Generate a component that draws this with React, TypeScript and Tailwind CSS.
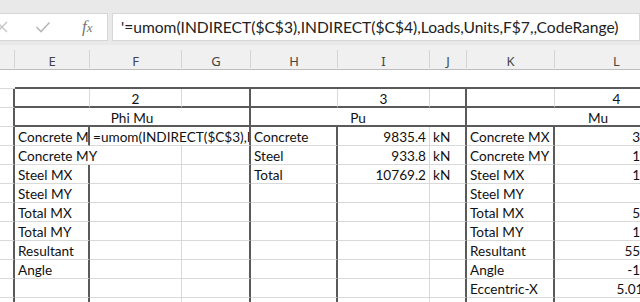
import React, { FC } from "react";

type Edge = "n" | "l" | "d";

interface Cell {
    w: number;
    text?: string;
    align?: "left" | "center" | "right";
    r?: Edge;
    b?: Edge;
}

const cellFont = { fontFamily: "Lato, 'Liberation Sans', sans-serif" };

const rightEdge: Record<Edge, string> = {
    n: "",
    l: "border-r border-r-[#d9d9d9]",
    d: "border-r-2 border-r-[#5a5a5a]",
};

const bottomEdge: Record<Edge, string> = {
    n: "",
    l: "border-b border-b-[#d9d9d9]",
    d: "border-b-2 border-b-[#5a5a5a]",
};

const Row: FC<{ cells: Cell[] }> = ({ cells }) => {
    return (
        <div className="flex h-[19px] shrink-0">
            {cells.map((c, i) => (
                <div
                    key={i}
                    style={{ width: c.w }}
                    className={`shrink-0 h-full overflow-hidden whitespace-nowrap px-[3px] text-[13.6px] leading-[20px] text-[#111] ${rightEdge[c.r ?? "l"]} ${bottomEdge[c.b ?? "l"]} ${
                        c.align === "center" ? "text-center" : c.align === "right" ? "text-right" : "text-left"
                    }`}
                >
                    {c.text}
                </div>
            ))}
        </div>
    );
};

// column widths: stub, E, F, G, H, I, J, K, L
const W = { s: 15, E: 75, F: 92, G: 69, H: 87, I: 92, J: 37, K: 88, L: 124 };

const leftLabels = ["Steel MX", "Steel MY", "Total MX", "Total MY", "Resultant", "Angle", "", ""];
const rightLabels = ["Steel MX", "Steel MY", "Total MX", "Total MY", "Resultant", "Angle", "Eccentric-X", ""];
const rightValues = ["1254.3", "", "5426.8", "1738.2", "5531.74", "-18.134", "5.012764", ""];

const App: FC = () => {
    return (
        <div className="w-[640px] h-[302px] overflow-hidden bg-white flex flex-col">
            {/* formula bar */}
            <div className="h-[45px] shrink-0 bg-[#e9e9e9] pt-[13px] flex gap-[4px]">
                <div className="w-[109px] -ml-px h-[28px] bg-white border border-[#d6d6d6] flex items-center">
                    <svg width="12" height="12" viewBox="0 0 12 12" className="-ml-[4px]">
                        <path d="M1 1 L11 11 M11 1 L1 11" stroke="#c4c4c4" strokeWidth="1.3" fill="none" />
                    </svg>
                    <svg width="16" height="12" viewBox="0 0 16 12" className="ml-[27px]">
                        <path d="M1.5 6 L6 10.5 L14.5 1.5" stroke="#b8b8b8" strokeWidth="1.6" fill="none" />
                    </svg>
                    <span
                        className="ml-[31px] text-[17px] italic text-[#777]"
                        style={{ fontFamily: "'Liberation Serif', serif" }}
                    >
                        f<span className="text-[13px]">x</span>
                    </span>
                </div>
                <div
                    className="flex-1 h-[28px] bg-white border border-[#d6d6d6] pl-[8px] text-[15.6px] leading-[26px] text-[#222] whitespace-nowrap overflow-hidden"
                    style={cellFont}
                >
                    '=umom(INDIRECT($C$3),INDIRECT($C$4),Loads,Units,F$7,,CodeRange)
                </div>
            </div>

            {/* column headers */}
            <div
                className="h-[25px] shrink-0 flex bg-[#f0f0f0] border-b border-[#bdbdbd] text-[13px] text-[#444]"
                style={{ fontFamily: "'Noto Sans', 'Open Sans', sans-serif" }}
            >
                {[
                    ["", W.s],
                    ["E", W.E],
                    ["F", W.F],
                    ["G", W.G],
                    ["H", W.H],
                    ["I", W.I],
                    ["J", W.J],
                    ["K", W.K],
                    ["L", W.L],
                ].map(([t, w], i) => (
                    <div
                        key={i}
                        style={{ width: w as number }}
                        className="shrink-0 text-center border-r border-[#d4d4d4] h-[18px] mt-[5px] leading-[22px]"
                    >
                        {t}
                    </div>
                ))}
            </div>

            <div style={cellFont} className="flex flex-col">
                {/* blank row */}
                <Row
                    cells={[
                        { w: W.s, r: "n", b: "l" },
                        { w: W.E + W.F + W.G + W.H + W.I + W.J + W.K + W.L, r: "n", b: "d" },
                    ]}
                />
                {/* row with group numbers */}
                <Row
                    cells={[
                        { w: W.s, r: "d" },
                        { w: W.E, b: "d" },
                        { w: W.F, text: "2", align: "center", b: "d" },
                        { w: W.G, r: "d", b: "d" },
                        { w: W.H, b: "d" },
                        { w: W.I, text: "3", align: "center", b: "d" },
                        { w: W.J, r: "d", b: "d" },
                        { w: W.K, b: "d" },
                        { w: W.L, text: "4", align: "center", b: "d" },
                    ]}
                />
                {/* titles */}
                <Row
                    cells={[
                        { w: W.s, r: "d" },
                        { w: W.E + W.F + W.G, text: "Phi Mu", align: "center", r: "d", b: "d" },
                        { w: W.H + W.I + W.J, text: "Pu", align: "center", r: "d", b: "d" },
                        { w: 262, text: "Mu", align: "center", r: "n", b: "d" },
                    ]}
                />
                <Row
                    cells={[
                        { w: W.s, r: "d" },
                        { w: W.E, text: "Concrete MX", r: "d" },
                        { w: W.F + W.G, text: "=umom(INDIRECT($C$3),INDIRECT($C$4),Loads,Units,F$7,,CodeRange)", r: "d" },
                        { w: W.H, text: "Concrete", r: "d" },
                        { w: W.I, text: "9835.4", align: "right" },
                        { w: W.J, text: "kN", r: "d" },
                        { w: W.K, text: "Concrete MX", r: "d" },
                        { w: W.L, text: "3864.5", align: "right" },
                    ]}
                />
                <Row
                    cells={[
                        { w: W.s, r: "d" },
                        { w: W.E + W.F, text: "Concrete MY" },
                        { w: W.G, r: "d" },
                        { w: W.H, text: "Steel", r: "d" },
                        { w: W.I, text: "933.8", align: "right" },
                        { w: W.J, text: "kN", r: "d" },
                        { w: W.K, text: "Concrete MY", r: "d" },
                        { w: W.L, text: "1329.6", align: "right" },
                    ]}
                />
                <Row
                    cells={[
                        { w: W.s, r: "d" },
                        { w: W.E, text: leftLabels[0], r: "d" },
                        { w: W.F },
                        { w: W.G, r: "d" },
                        { w: W.H, text: "Total", r: "d" },
                        { w: W.I, text: "10769.2", align: "right" },
                        { w: W.J, text: "kN", r: "d" },
                        { w: W.K, text: rightLabels[0], r: "d" },
                        { w: W.L, text: rightValues[0], align: "right" },
                    ]}
                />
                {leftLabels.slice(1).map((lab, i) => (
                    <Row
                        key={i}
                        cells={[
                            { w: W.s, r: "d" },
                            { w: W.E, text: lab, r: "d" },
                            { w: W.F },
                            { w: W.G, r: "d" },
                            { w: W.H, r: "d" },
                            { w: W.I },
                            { w: W.J, r: "d" },
                            { w: W.K, text: rightLabels[i + 1], r: "d" },
                            { w: W.L, text: rightValues[i + 1], align: "right" },
                        ]}
                    />
                ))}
            </div>
        </div>
    );
};

export default App;
